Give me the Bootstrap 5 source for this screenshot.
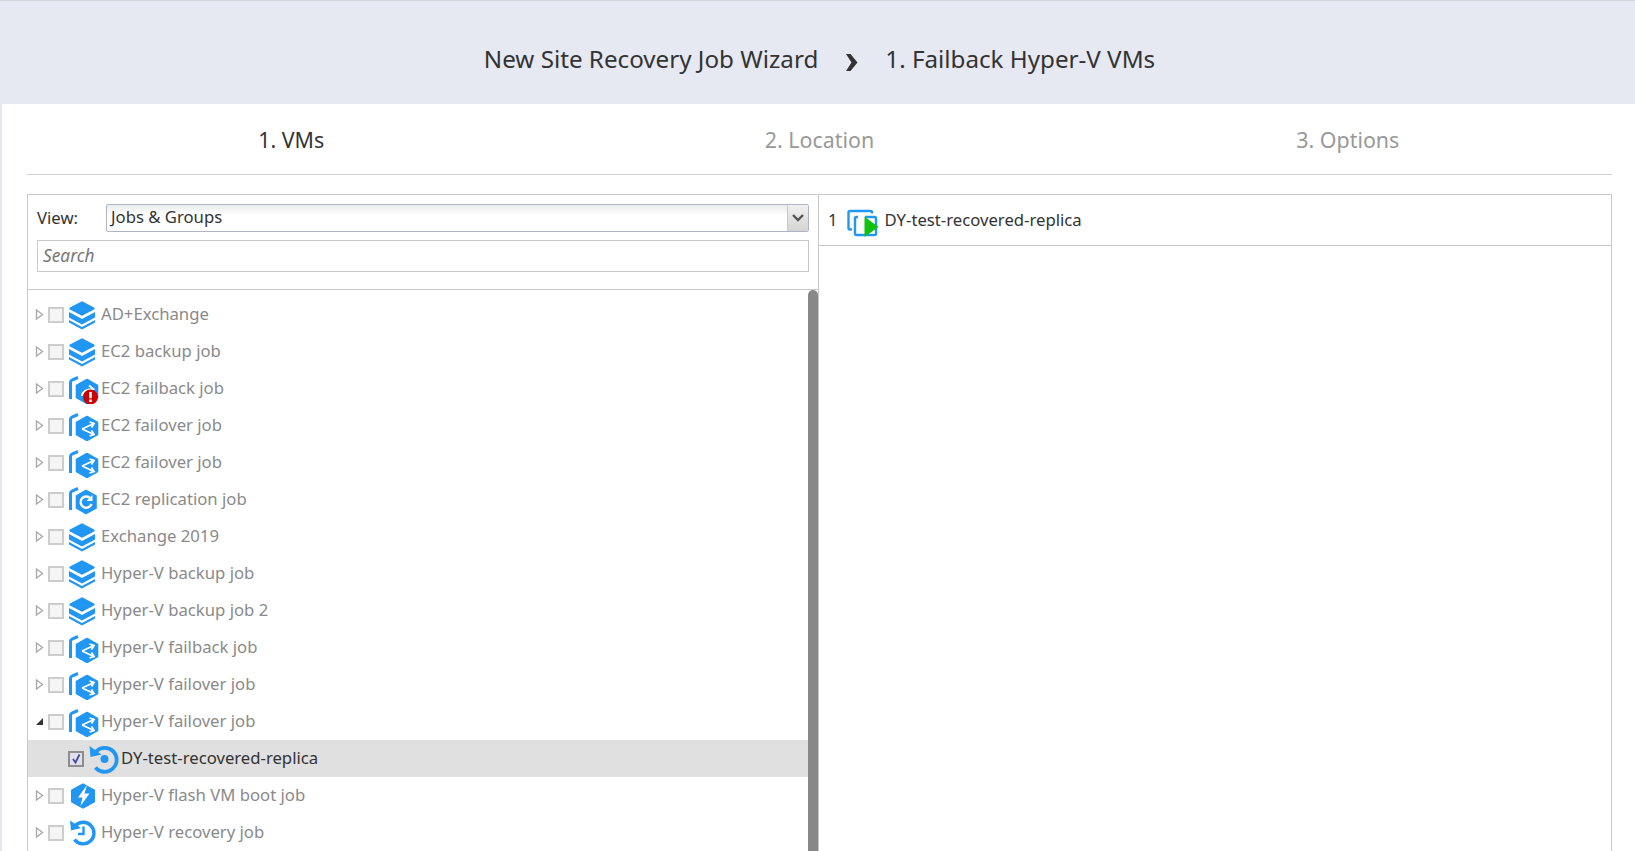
<!DOCTYPE html>
<html lang="en">
<head>
<meta charset="UTF-8" />
<title>New Site Recovery Job Wizard</title>
<link href="https://cdn.jsdelivr.net/npm/bootstrap@5.3.2/dist/css/bootstrap.min.css" rel="stylesheet">
<style>
  html, body { height: 100%; }
  body {
    background: #e6e9f2;
    font-family: "Noto Sans", "Liberation Sans", sans-serif;
    font-size: 16.7px;
    color: #333;
    overflow: hidden;
  }
  .wiz-head { height: 104px; padding: 14px 0 0 4px; font-size: 24.2px; color: #333; gap: 27px; border-top: 1px solid #d0d5da; }
  .wiz-head svg { width: 13px; height: 19px; margin-top: 5px; }
  .wiz-body { margin-left: 2px; height: 747px; background: #fff; padding: 0 23px 0 25px; }
  .wiz-steps { height: 71px; padding-top: 2px; border-bottom: 1px solid #d0d0d0; font-size: 21.4px; color: #999; }
  .wiz-steps .is-on { color: #333; }
  .wiz-panel { margin-top: 19px; height: 657px; border: 1px solid #c9c9c9; border-bottom: 0; }
  .pane-left { width: 791px; border-right: 1px solid #c9c9c9; }
  .pane-filter { height: 95px; border-bottom: 1px solid #c9c9c9; padding: 9px 9px 0 9px; }
  .view-label { width: 69px; }
  .view-select {
    height: 28px;
    border: 1px solid #b0b4c6;
    border-radius: 2px;
    padding-left: 4px;
    background: linear-gradient(#e9ecec, #fff 40%);
  }
  .view-select > span:first-child { margin-top: -1px; }
  .view-arrow { width: 21px; background: linear-gradient(#f0f0f0, #d4d4d4); border-left: 1px solid #c9c9c9; }
  .search-box { height: 32px; margin-top: 8px; border: 1px solid #c9c9c9; padding-left: 5px; font-size: 17.3px; font-style: italic; color: #777; line-height: 30px; }
  .tree-wrap { height: 561px; overflow: hidden; }
  .tree-list { padding-top: 6px; }
  .tree-row { height: 37px; padding-left: 7px; color: #8a8a8a; }
  .tree-row > span:last-child { margin-top: -1px; }
  .tree-row.is-sel { background: #e0e0e0; color: #333; padding-left: 40px; }
  .tree-arrow { width: 9px; height: 11px; margin-right: 4px; flex: none; }
  .tree-check { width: 16px; height: 16px; flex: none; border: 2px solid #cdcdcd; background: #f5f5f5; }
  .is-sel .tree-check { border-color: #8e8e8e; background: #dfe0ea; }
  .tree-icon { width: 32px; height: 30px; flex: none; margin: 0 1px 0 4px; }
  .tree-scroll { width: 10px; background: #888; border-radius: 5px 5px 0 0; flex: none; }
  .pick-row { height: 51px; border-bottom: 1px solid #c9c9c9; padding-left: 9px; }
  .pick-row svg { width: 32px; height: 30px; margin: 3px 6px 0 9px; }
  .pick-row span:last-child { margin-top: -1px; }
</style>
</head>
<body>

<svg width="0" height="0" class="position-absolute">
  <defs>
    <path id="bracket" d="M10 3.5 4 6Q2.5 6.8 2.5 8.5V25" fill="none" stroke="#2196f3" stroke-width="3"/>
    <symbol id="ic-stack" viewBox="0 0 32 30">
      <path d="M14 2.5 25.5 8.5 14 14.5 2.5 8.5Z" fill="#2196f3" stroke="#2196f3" stroke-width="2.4" stroke-linejoin="round"/>
      <path d="M1 12 14 19 27 12V17.5L14 24.5 1 17.5Z" fill="#2196f3"/>
      <path d="M1 20 14 27 27 20V22.5L14 29.5 1 22.5Z" fill="#2196f3"/>
    </symbol>
    <symbol id="ic-failover" viewBox="0 0 32 30">
      <use href="#bracket"/>
      <path d="M19 5.5 29.5 11.5V23.5L19 29.5 8.5 23.5V11.5Z" fill="#2196f3" stroke="#2196f3" stroke-width="1.6" stroke-linejoin="round"/>
      <path d="M14 18 26 12.5M14 18 26 23.5M21.5 11 26 12.5 23.5 16.5M21.5 25 26 23.5 23.5 19.5" fill="none" stroke="#fff" stroke-width="1.8"/>
    </symbol>
    <symbol id="ic-failback" viewBox="0 0 32 30">
      <use href="#bracket"/>
      <path d="M19 5.5 29.5 11.5V23.5L19 29.5 8.5 23.5V11.5Z" fill="#2196f3" stroke="#2196f3" stroke-width="1.6" stroke-linejoin="round"/>
      <path d="M14 22Q14.5 15.5 25 15M21 11.5 25.5 15 21.5 18.5" fill="none" stroke="#fff" stroke-width="1.8"/>
      <circle cx="22.5" cy="23" r="7.5" fill="#c00"/>
      <path d="M22.5 18V24.2M22.5 25.4V28" stroke="#fff" stroke-width="2.6"/>
    </symbol>
    <symbol id="ic-replica" viewBox="0 0 32 30">
      <use href="#bracket"/>
      <path d="M18 5.5 28 11V23L18 28.5 8.5 23V11Z" fill="#2196f3" stroke="#2196f3" stroke-width="1.6" stroke-linejoin="round"/>
      <path d="M22.5 13.5A5.6 5.6 0 1 0 23.5 19" fill="none" stroke="#fff" stroke-width="2.4"/>
      <path d="M24.5 10V16H18.5Z" fill="#fff"/>
    </symbol>
    <symbol id="ic-flash" viewBox="0 0 32 30">
      <path d="M15 3.5 26 9.5V20.5L15 26.5 4 20.5V9.5Z" fill="#2196f3" stroke="#2196f3" stroke-width="2" stroke-linejoin="round"/>
      <path d="M19 4 10 16.5H14.5L12.5 25 21.5 12.5H16.5Z" fill="#fff"/>
    </symbol>
    <symbol id="ic-restore" viewBox="0 0 32 30">
      <path d="M7.5 7.5A10.8 10.8 0 1 1 6.5 21.5" fill="none" stroke="#2196f3" stroke-width="3.4"/>
      <path d="M2 2.5 3 12.5 13 10Z" fill="#2196f3"/>
      <path d="M15.5 8.5V16H10" fill="none" stroke="#2196f3" stroke-width="2.4"/>
    </symbol>
    <symbol id="ic-restore-vm" viewBox="0 0 32 30">
      <path d="M8 7.5A12 12 0 1 1 7.5 23.5" fill="none" stroke="#2196f3" stroke-width="3.8"/>
      <path d="M1.5 2 2.5 13 13.5 10.5Z" fill="#2196f3"/>
      <circle cx="16.5" cy="15" r="4" fill="#2196f3"/>
    </symbol>
  </defs>
</svg>

<div class="wiz-head d-flex justify-content-center align-items-center">
  <span>New Site Recovery Job Wizard</span>
  <svg viewBox="0 0 13 19"><path d="M1 1H5.5L12.5 9.5 5.5 18H1L6.5 9.5Z" fill="#333"/></svg>
  <span>1. Failback Hyper-V VMs</span>
</div>

<div class="wiz-body">
  <div class="wiz-steps row g-0 align-items-center text-center">
    <div class="col-4 is-on">1. VMs</div>
    <div class="col-4">2. Location</div>
    <div class="col-4">3. Options</div>
  </div>

  <div class="wiz-panel d-flex">
    <div class="pane-left">
      <div class="pane-filter">
        <div class="d-flex align-items-center">
          <span class="view-label">View:</span>
          <div class="view-select flex-grow-1 d-flex justify-content-between">
            <span>Jobs &amp; Groups</span>
            <span class="view-arrow d-flex align-items-center justify-content-center">
              <svg width="12" height="8" viewBox="0 0 12 8"><path d="M1 1 6 6 11 1" fill="none" stroke="#555" stroke-width="2.4"/></svg>
            </span>
          </div>
        </div>
        <div class="search-box">Search</div>
      </div>
      <div class="tree-wrap d-flex">
        <div class="tree-list flex-grow-1" id="tree"></div>
        <div class="tree-scroll"></div>
      </div>
    </div>
    <div class="flex-grow-1">
      <div class="pick-row d-flex align-items-center">
        <span>1</span>
        <svg viewBox="0 0 32 30">
          <path d="M25 6.5V5.5Q25 4 23.5 4H3Q1.5 4 1.5 5.5V21Q1.5 22.5 3 22.5H5" fill="none" stroke="#2196f3" stroke-width="2.4"/>
          <path d="M18 10H27.5Q29 10 29 11.5V26.5Q29 28 27.5 28H9.5Q8 28 8 26.5V11.5Q8 10 9.5 10H11" fill="none" stroke="#2196f3" stroke-width="2.4"/>
          <path d="M17.5 9.5 31.5 20 17.5 30Z" fill="#11c211"/>
        </svg>
        <span>DY-test-recovered-replica</span>
      </div>
    </div>
  </div>
</div>

<script>
  const rows = [
    ['AD+Exchange', 'stack'],
    ['EC2 backup job', 'stack'],
    ['EC2 failback job', 'failback'],
    ['EC2 failover job', 'failover'],
    ['EC2 failover job', 'failover'],
    ['EC2 replication job', 'replica'],
    ['Exchange 2019', 'stack'],
    ['Hyper-V backup job', 'stack'],
    ['Hyper-V backup job 2', 'stack'],
    ['Hyper-V failback job', 'failover'],
    ['Hyper-V failover job', 'failover'],
    ['Hyper-V failover job', 'failover', 'open'],
    ['DY-test-recovered-replica', 'restore-vm', 'sel'],
    ['Hyper-V flash VM boot job', 'flash'],
    ['Hyper-V recovery job', 'restore']
  ];

  const arrowClosed = '<path d="M1.5 1 7.5 5.5 1.5 10Z" fill="#fff" stroke="#aaa" stroke-width="1.4"/>';
  const arrowOpen = '<path d="M8 2V9H1Z" fill="#333"/>';

  document.getElementById('tree').innerHTML = rows.map(([name, icon, state]) => {
    const sel = state === 'sel';
    const arrow = sel ? '' : `<svg class="tree-arrow" viewBox="0 0 9 11">${state === 'open' ? arrowOpen : arrowClosed}</svg>`;
    const tick = sel ? '<svg class="d-block" viewBox="0 0 12 12"><path d="M3 6 5.5 9.5 9.5 1.5" fill="none" stroke="#3b4a9c" stroke-width="1.8"/></svg>' : '';
    return `<div class="tree-row d-flex align-items-center${sel ? ' is-sel' : ''}">
      ${arrow}<span class="tree-check">${tick}</span>
      <svg class="tree-icon"><use href="#ic-${icon}"/></svg>
      <span>${name}</span>
    </div>`;
  }).join('');
</script>
</body>
</html>
